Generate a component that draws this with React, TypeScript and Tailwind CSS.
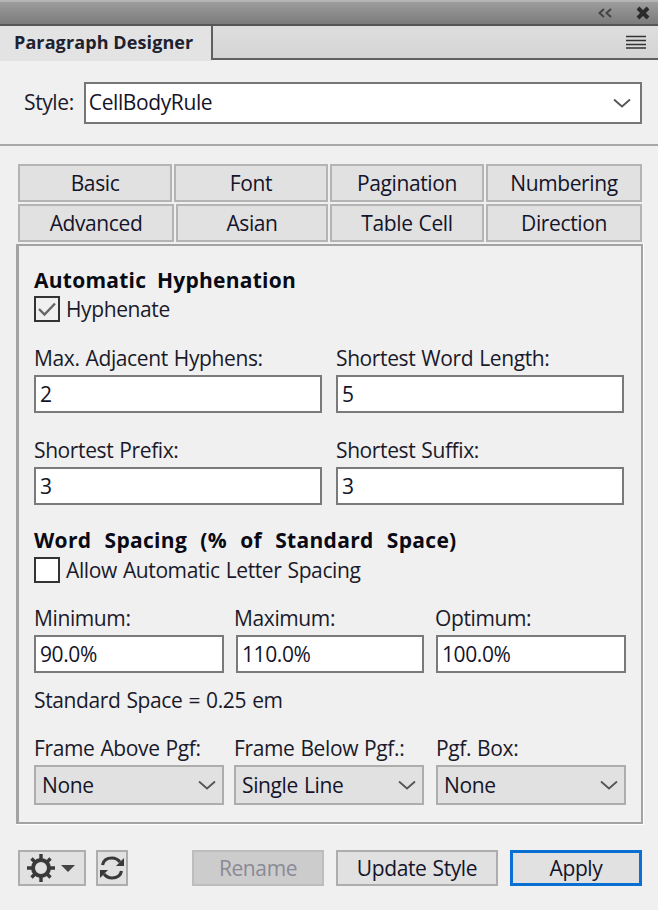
import React from "react";

const Chevron = ({ className = "" }: { className?: string }) => (
  <svg width="18" height="10" viewBox="0 0 18 10" fill="none" className={className}>
    <path d="M1 1.5 L9 8.5 L17 1.5" stroke="#555" strokeWidth="1.8" />
  </svg>
);

const Label = ({ children, className = "" }: { children: React.ReactNode; className?: string }) => (
  <div className={`h-[26px] leading-[26px] text-[#1a1a2a] whitespace-nowrap ${className}`}>{children}</div>
);

const Input = ({ value, className = "" }: { value: string; className?: string }) => (
  <div className={`h-[38px] mt-[4px] border-2 border-[#7a7a7a] bg-white pl-[4px] leading-[34px] text-[#14142a] ${className}`}>{value}</div>
);

const Field = ({ label, value, labelClass = "" }: { label: string; value: string; labelClass?: string }) => (
  <div>
    <Label className={labelClass}>{label}</Label>
    <Input value={value} />
  </div>
);

const Select = ({ label, value, className = "" }: { label: string; value: string; className?: string }) => (
  <div className={className}>
    <Label>{label}</Label>
    <div className="h-[40px] mt-[4px] border-2 border-[#adadad] bg-[#e1e1e1] pl-[6px] pr-[6px] flex items-center justify-between text-[#14142a]">
      <span className="pt-[2px]">{value}</span>
      <Chevron />
    </div>
  </div>
);

const Check = ({ checked, label }: { checked?: boolean; label: string }) => (
  <div className="flex items-center h-[26px] gap-[6px]">
    <div className={`w-[26px] h-[26px] border-2 border-[#333] flex items-center justify-center ${checked ? "bg-[#f0f0f0]" : "bg-white"}`}>
      {checked && (
        <svg width="20" height="16" viewBox="0 0 20 16" fill="none">
          <path d="M2 8 L7.5 13.5 L18 2.5" stroke="#666" strokeWidth="2.4" />
        </svg>
      )}
    </div>
    <span className="text-[#1a1a2a] pt-[2px]">{label}</span>
  </div>
);

const TabBtn = ({ label, className = "" }: { label: string; className?: string }) => (
  <div className={`h-[38px] border-2 border-[#b4b4b4] bg-[#e1e1e1] flex items-center justify-center pt-[2px] text-[#14142a] ${className}`}>{label}</div>
);

const Gear = () => (
  <svg width="30" height="30" viewBox="0 0 30 30" fill="none">
    <circle cx="15" cy="15" r="8" stroke="#3a3a3a" strokeWidth="4" />
    <g stroke="#3a3a3a" strokeWidth="3.4">
      <path d="M15 1V6.5M15 23.5V29M1 15H6.5M23.5 15H29M5.5 5.5L9 9M21 21L24.5 24.5M24.5 5.5L21 9M9 21L5.5 24.5" />
    </g>
  </svg>
);

const Refresh = () => (
  <svg width="24" height="26" viewBox="0 0 24 26" fill="none">
    <path d="M2.5 10 C3.5 5 7 3 12 3 C15.5 3 18 4.5 20 7" stroke="#3a3a3a" strokeWidth="3.2" />
    <path d="M16 11 H24 V3 Z" fill="#3a3a3a" />
    <path d="M21.5 16 C20.5 21 17 23 12 23 C8.5 23 6 21.5 4 19" stroke="#3a3a3a" strokeWidth="3.2" />
    <path d="M8 15 H0 V23 Z" fill="#3a3a3a" />
  </svg>
);

export default function App() {
  return (
    <div
      className="w-[658px] h-[910px] bg-[#f0f0f0] overflow-hidden text-[21px] tracking-[-0.39px] [word-spacing:1px] text-[#14142a]"
      style={{ fontFamily: '"Open Sans", "Noto Sans", sans-serif' }}
    >
      {/* Title bar */}
      <div className="h-[26px] border-t-2 border-t-[#b5b5b5] border-b-2 border-b-[#565656] bg-gradient-to-b from-[#9c9c9c] to-[#7c7c7c] flex items-center justify-end pr-[8px] gap-[23px]">
        <svg width="15" height="10" viewBox="0 0 15 10" fill="none">
          <path d="M6 1 L1.5 5 L6 9 M13 1 L8.5 5 L13 9" stroke="#444" strokeWidth="2" />
        </svg>
        <svg width="14" height="14" viewBox="0 0 14 14" fill="none">
          <path d="M2 2 L12 12 M12 2 L2 12" stroke="#2a2a2a" strokeWidth="4" />
        </svg>
      </div>

      {/* Tab strip */}
      <div className="h-[35px] flex">
        <div className="w-[211px] h-[35px] bg-[#e3e3e3] pl-[14px] leading-[33px] text-[18px] tracking-[0.1px] [word-spacing:0px] font-bold text-[#20202e]">
          Paragraph Designer
        </div>
        <div className="flex-1 h-[34px] bg-gradient-to-b from-[#dedede] to-[#d4d4d4] border-l-2 border-b-2 border-[#5f5f5f] flex items-center justify-end pr-[12px]">
          <svg width="20" height="14" viewBox="0 0 20 14" fill="none">
            <path d="M0 1.5H20M0 5.5H20M0 9.5H20M0 13H20" stroke="#333" strokeWidth="1.6" />
          </svg>
        </div>
      </div>

      {/* Style row */}
      <div className="flex items-center mt-[21px] pl-[24px] pr-[16px] h-[42px] gap-[10px]">
        <span className="text-[#1a1a2a]">Style:</span>
        <div className="flex-1 h-[42px] border-2 border-[#767676] bg-white pl-[3px] pr-[9px] flex items-center justify-between">
          <span>CellBodyRule</span>
          <Chevron />
        </div>
      </div>

      <div className="h-[2px] bg-[#a8a8a8] mt-[20px]" />

      {/* Tabs */}
      <div className="mt-[18px] pl-[18px] pr-[16px]">
        <div className="grid grid-cols-[154px_154px_154px_156px] gap-x-[2px]">
          <TabBtn label="Basic" />
          <TabBtn label="Font" />
          <TabBtn label="Pagination" />
          <TabBtn label="Numbering" />
        </div>
        <div className="grid grid-cols-[156px_152px_154px_156px] gap-x-[2px] mt-[2px]">
          <TabBtn label="Advanced" />
          <TabBtn label="Asian" />
          <TabBtn label="Table Cell" />
          <TabBtn label="Direction" />
        </div>
      </div>

      {/* Panel */}
      <div className="ml-[16px] w-[628px] h-[581px] mt-[2px] border-b border-r border-white">
        <div className="h-full border-2 border-[#a3a3a3] border-l-[3px] pl-[15px] pr-[15px] pt-[21px]">
          <div className="h-[26px] leading-[26px] font-bold text-[#0a0a14] whitespace-nowrap tracking-[0.25px] [word-spacing:5px]">Automatic Hyphenation</div>
          <div className="mt-[3px]"><Check checked label="Hyphenate" /></div>

          <div className="grid grid-cols-[288px_288px] gap-x-[14px] mt-[23px]">
            <Field label="Max. Adjacent Hyphens:" value="2" />
            <Field label="Shortest Word Length:" value="5" />
          </div>
          <div className="grid grid-cols-[288px_288px] gap-x-[14px] mt-[24px]">
            <Field label="Shortest Prefix:" value="3" />
            <Field label="Shortest Suffix:" value="3" />
          </div>

          <div className="h-[26px] leading-[26px] font-bold text-[#0a0a14] whitespace-nowrap tracking-[0.3px] [word-spacing:7.5px] mt-[22px]">Word Spacing (% of Standard Space)</div>
          <div className="mt-[4px]"><Check label="Allow Automatic Letter Spacing" /></div>

          <div className="grid grid-cols-[190px_188px_190px] gap-x-[12px] mt-[22px]">
            <Field label="Minimum:" value="90.0%" />
            <Field label="Maximum:" value="110.0%" labelClass="-ml-[2px]" />
            <Field label="Optimum:" value="100.0%" labelClass="-ml-[1px]" />
          </div>

          <Label className="mt-[14px]">Standard Space = 0.25 em</Label>

          <div className="grid grid-cols-[190px_190px_192px] gap-x-[10px] mt-[22px]">
            <Select label="Frame Above Pgf:" value="None" />
            <Select label="Frame Below Pgf.:" value="Single Line" />
            <Select label="Pgf. Box:" value="None" className="ml-[2px]" />
          </div>
        </div>
      </div>

      {/* Bottom */}
      <div className="flex items-center mt-[25px] pl-[18px] pr-[16px] h-[36px]">
        <div className="w-[68px] h-[36px] border-2 border-[#adadad] bg-[#e1e1e1] flex items-center pl-[6px] gap-[5px]">
          <Gear />
          <svg width="14" height="7" viewBox="0 0 14 7"><path d="M0 0H14L7 7Z" fill="#444" /></svg>
        </div>
        <div className="w-[32px] h-[36px] ml-[10px] border-2 border-[#adadad] bg-[#e1e1e1] flex items-center justify-center">
          <Refresh />
        </div>
        <div className="w-[132px] h-[36px] ml-[64px] border-2 border-[#bdbdbd] bg-[#cccccc] flex items-center justify-center pt-[1px] text-[#8a8a96]">Rename</div>
        <div className="w-[162px] h-[36px] ml-[12px] border-2 border-[#adadad] bg-[#e1e1e1] flex items-center justify-center pt-[1px]">Update Style</div>
        <div className="w-[132px] h-[36px] ml-[12px] border-[3px] border-[#0a6fd2] bg-[#e1e1e1] flex items-center justify-center pt-[1px]">Apply</div>
      </div>
    </div>
  );
}
